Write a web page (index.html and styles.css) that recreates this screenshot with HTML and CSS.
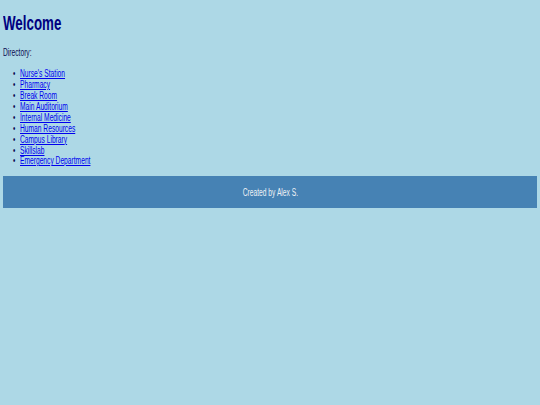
FILE: index.html
```html
<!DOCTYPE html>
<html lang="en">
<head>
<meta charset="utf-8">
<title>Welcome</title>
<link rel="stylesheet" href="styles.css">
</head>
<body>
<h1 class="title">Welcome</h1>
<p class="intro">Directory:</p>
<ul class="directory">
  <li><a href="#">Nurse's Station</a></li>
  <li><a href="#">Pharmacy</a></li>
  <li><a href="#">Break Room</a></li>
  <li><a href="#">Main Auditorium</a></li>
  <li><a href="#">Internal Medicine</a></li>
  <li><a href="#">Human Resources</a></li>
  <li><a href="#">Campus Library</a></li>
  <li><a href="#">Skillslab</a></li>
  <li><a href="#">Emergency Department</a></li>
</ul>
<footer class="footer"><span class="credit">Created by Alex S.</span></footer>
</body>
</html>
```

FILE: styles.css
```css
html {
  background: #add8e6;
}
body {
  margin: 0 3px;
  font-family: "Liberation Sans", Arial, sans-serif;
  font-size: 10px;
  line-height: 11px;
  color: #0a0a50;
}
.title,
.intro,
.directory,
.credit {
  transform: scaleX(0.667);
  transform-origin: 0 0;
}
.title {
  margin: 12px 0 13px;
  font-size: 20px;
  line-height: 22px;
  font-weight: bold;
  color: #000080;
}
.intro {
  margin: 0;
}
.directory {
  margin: 11.2px 0 8.7px;
  padding-left: 25.5px;
  line-height: 10.9px;
}
.directory li::marker {
  content: "\2022\2002\2009";
}
.directory a {
  color: #0000ee;
}
.footer {
  display: flex;
  align-items: center;
  justify-content: center;
  height: 32px;
  background: #4682b4;
  color: #eef2f6;
}
.credit {
  display: inline-block;
  transform-origin: 50% 50%;
}
```
